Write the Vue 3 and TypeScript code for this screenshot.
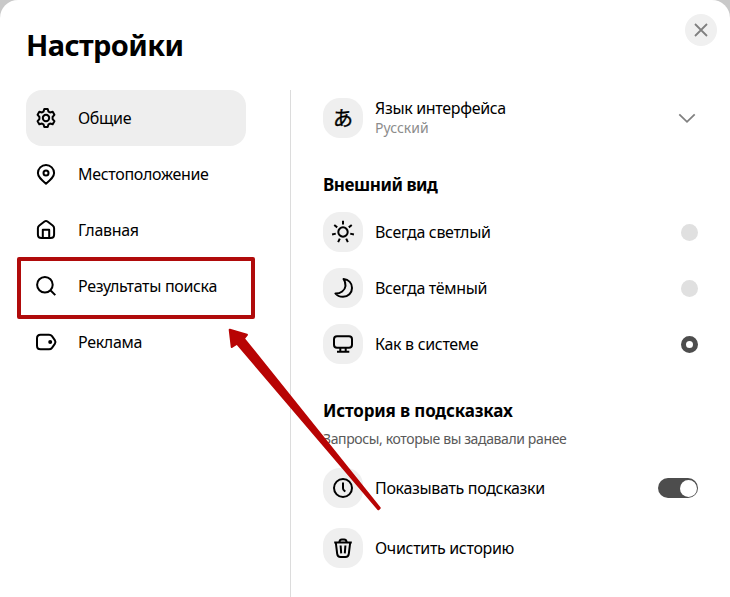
<template>
  <div class="backdrop">
    <div class="modal">
      <button class="close" type="button" aria-label="Закрыть">
        <svg width="16" height="16" viewBox="0 0 16 16"><path d="M2 2l12 12M14 2L2 14" /></svg>
      </button>

      <h1>Настройки</h1>

      <div class="columns">
        <nav>
          <a v-for="item in menu" :key="item.icon" :class="['nav-item', { active: item.active }]">
            <svg class="icon" viewBox="0 0 24 24"><path :d="icons[item.icon]" /><circle v-if="item.icon === 'tag'" class="dot" cx="16.2" cy="12" r="2" /></svg>
            <span>{{ item.label }}</span>
          </a>
        </nav>

        <main>
          <div class="row language">
            <div class="badge"><span class="kana">あ</span></div>
            <div class="text">
              <div class="label">Язык интерфейса</div>
              <div class="value">Русский</div>
            </div>
            <svg class="chevron" width="18" height="12" viewBox="0 0 18 12"><path d="M1.3 2.3L9 9.8L16.7 2.3" /></svg>
          </div>

          <h2 class="theme-title">Внешний вид</h2>
          <div v-for="t in themes" :key="t.icon" class="row" @click="theme = t.icon">
            <div class="badge">
              <svg class="icon" viewBox="0 0 24 24"><path :d="icons[t.icon]" /></svg>
            </div>
            <div class="label">{{ t.label }}</div>
            <span :class="['radio', { checked: theme === t.icon }]"></span>
          </div>

          <h2 class="history-title">История в подсказках</h2>
          <p>Запросы, которые вы задавали ранее</p>
          <div class="row" @click="showHints = !showHints">
            <div class="badge">
              <svg class="icon" viewBox="0 0 24 24"><path :d="icons.clock" /></svg>
            </div>
            <div class="label">Показывать подсказки</div>
            <span :class="['toggle', { on: showHints }]"></span>
          </div>
          <div class="row clear">
            <div class="badge">
              <svg class="icon" viewBox="0 0 24 24"><path :d="icons.trash" /></svg>
            </div>
            <div class="label">Очистить историю</div>
          </div>
        </main>
      </div>
    </div>

    <div class="highlight"></div>
    <svg class="arrow" width="160" height="190" viewBox="0 0 160 190">
      <path d="M9.8 9.8L26.8 14.9L23.8 18.6L159.6 188L158.4 189.2L17 23.6L11.8 26.8Z" />
    </svg>
  </div>
</template>


<script setup lang="ts">
import {ref} from "vue";

interface MenuItem {
  icon: string;
  label: string;
  active?: boolean;
}

const menu: MenuItem[] = [
  {icon: 'gear', label: 'Общие', active: true},
  {icon: 'pin', label: 'Местоположение'},
  {icon: 'home', label: 'Главная'},
  {icon: 'search', label: 'Результаты поиска'},
  {icon: 'tag', label: 'Реклама'},
];

const themes: MenuItem[] = [
  {icon: 'sun', label: 'Всегда светлый'},
  {icon: 'moon', label: 'Всегда тёмный'},
  {icon: 'monitor', label: 'Как в системе'},
];

const theme = ref('monitor');
const showHints = ref(true);

// seven rays around the circle
function sunRays() {
  let d = '';
  for (let i = 0; i < 7; i++) {
    const a = i * 2 * Math.PI / 7;
    const x = Math.sin(a);
    const y = -Math.cos(a);
    d += `M${12 + x * 7.4} ${12 + y * 7.4}L${12 + x * 11.2} ${12 + y * 11.2}`;
  }
  return d;
}

const icons: Record<string, string> = {
  gear: 'M10.3 3h3.4l.8 2.6 1.5.8 2.7-.6 1.7 3-1.8 2.1v2.2l1.8 2.1-1.7 3-2.7-.6-1.5.8-.8 2.6h-3.4l-.8-2.6-1.5-.8-2.7.6-1.7-3 1.8-2.1v-2.2L3.6 8.8l1.7-3 2.7.6 1.5-.8zM15.2 12a3.2 3.2 0 1 1-6.4 0a3.2 3.2 0 1 1 6.4 0z',
  pin: 'M12 21.7C7.5 18 3.9 15 3.9 11a8.1 8 0 0 1 16.2 0C20.1 15 16.5 18 12 21.7zM14.5 11a2.5 2.5 0 1 1-5 0a2.5 2.5 0 1 1 5 0z',
  home: 'M3.9 10.3c0-1.2.5-2.1 1.4-2.8L10.5 3.5q1.5-1.1 3 0l5.2 4c.9.7 1.4 1.6 1.4 2.8v6.2q0 3.5-3.5 3.5h-9.2q-3.5 0-3.5-3.5zM8.8 20v-8.2h6.4V20',
  search: 'M18.7 10.7a7.8 7.8 0 1 1-15.6 0a7.8 7.8 0 1 1 15.6 0zM16.4 16.2l4.9 4.9',
  tag: 'M6.5 4.7h8.5q1.9 0 3 1.5l2.8 3.9q1.3 1.9 0 3.8l-2.8 3.9q-1.1 1.5-3 1.5H6.5q-3.5 0-3.5-3.5V8.2q0-3.5 3.5-3.5z',
  sun: 'M16.7 12a4.7 4.7 0 1 1-9.4 0a4.7 4.7 0 1 1 9.4 0z' + sunRays(),
  moon: 'M12.5 3C17.7 3.6 21 7.3 21 12c0 5.1-3.9 8.8-9 8.8c-3.4 0-6-1.2-7.6-3.3C9.5 17.6 14 14.5 14.5 10C14.7 7.2 14 5 12.5 3z',
  monitor: 'M6 4.2h12q3 0 3 3v5.6q0 3-3 3H6q-3 0-3-3V7.2q0-3 3-3zM9.3 16v3.4M14.7 16v3.4M6 19.7h12.3',
  clock: 'M21 12a9 9 0 1 1-18 0a9 9 0 1 1 18 0zM12 6.5v5.5q0 1 .6 1.8l1.6 1.9',
  trash: 'M3.2 6.4h17.6M8.3 6c.3-1.7 1.2-2.6 2.5-2.6h2.4c1.3 0 2.2.9 2.5 2.6M4.8 6.5l1.4 11.3q.4 3.2 3.4 3.2h4.8q3 0 3.4-3.2l1.4-11.3M9.6 9.5l.6 7.8M14.4 9.5l-.6 7.8',
};
</script>


<style>
body {
  margin: 0;
  overflow: hidden;
}
</style>

<style scoped>
.backdrop {
  position: relative;
  height: 597px;
  overflow: hidden;
  background: #c9c9c9;
  font-family: "Noto Sans", "Open Sans", sans-serif;
  color: #000;
}

.modal {
  position: relative;
  height: 597px;
  box-sizing: border-box;
  padding: 22px 32px 0 26px;
  border-radius: 18px 18px 0 0;
  background: #fff;
}

.close {
  position: absolute;
  top: 14px;
  right: 13px;
  display: flex;
  align-items: center;
  justify-content: center;
  width: 32px;
  height: 32px;
  padding: 0;
  border: 0;
  border-radius: 50%;
  background: #f0f0f0;
}

.close path,
.chevron path {
  fill: none;
  stroke: #808080;
  stroke-width: 1.8;
}

h1 {
  margin: 0;
  height: 46px;
  font-size: 29px;
  line-height: 46px;
  letter-spacing: -0.6px;
}

.columns {
  display: flex;
  margin-top: 22px;
}

nav {
  width: 220px;
  margin-right: 44px;
}

.nav-item {
  display: flex;
  align-items: center;
  gap: 20px;
  height: 56px;
  padding-left: 8px;
  border-radius: 16px;
  font-size: 16px;
  letter-spacing: -0.32px;
}

.nav-item.active {
  background: #eee;
}

.icon {
  width: 24px;
  height: 24px;
  flex: none;
  fill: none;
  stroke: #000;
  stroke-width: 2;
  stroke-linejoin: round;
}

.icon .dot {
  fill: #000;
  stroke: none;
}

main {
  flex: 1;
  height: 507px;
  padding-left: 32px;
  border-left: 1px solid #dcdcdc;
}

.row {
  display: flex;
  align-items: center;
  height: 56px;
}

.badge {
  display: flex;
  align-items: center;
  justify-content: center;
  width: 40px;
  height: 40px;
  margin-right: 12px;
  border-radius: 17px;
  background: #efefef;
}

.kana {
  font: 400 20px/22px "Noto Sans CJK JP", sans-serif;
  -webkit-text-stroke: 0.4px #000;
}

.label {
  font-size: 16px;
  line-height: 20px;
  letter-spacing: -0.32px;
  white-space: nowrap;
}

.language .value {
  font-size: 14px;
  line-height: 20px;
  color: #8c8c8c;
}

.chevron {
  margin-left: auto;
  margin-right: 2px;
}

h2 {
  margin: 0;
  font-size: 17px;
  line-height: 24px;
  white-space: nowrap;
}

.theme-title {
  margin: 27px 0 7px;
  letter-spacing: -0.45px;
}

.history-title {
  margin-top: 27px;
  letter-spacing: -0.16px;
}

p {
  margin: 6px 0 11px;
  font-size: 14px;
  line-height: 20px;
  letter-spacing: -0.38px;
  white-space: nowrap;
  color: #595959;
}

.radio {
  width: 17px;
  height: 17px;
  margin-left: auto;
  box-sizing: border-box;
  border-radius: 50%;
  background: #e0e0e0;
}

.radio.checked {
  border: 5px solid #4d4d4d;
  background: #fff;
}

.toggle {
  width: 40px;
  height: 20px;
  margin-left: auto;
  padding: 1.5px;
  box-sizing: border-box;
  border-radius: 10px;
  background: #bbb;
}

.toggle::after {
  content: "";
  display: block;
  width: 17px;
  height: 17px;
  border-radius: 50%;
  background: #fff;
}

.toggle.on {
  background: #4d4d4d;
}

.toggle.on::after {
  margin-left: auto;
}

.clear {
  margin-top: 4px;
}

.highlight {
  position: absolute;
  left: 17px;
  top: 257px;
  width: 238px;
  height: 62px;
  box-sizing: border-box;
  border: 4px solid #b00b0b;
  border-radius: 2px;
}

.arrow {
  position: absolute;
  left: 220px;
  top: 320px;
  overflow: visible;
  pointer-events: none;
}

.arrow path {
  fill: #b80404;
  stroke: #b80404;
  stroke-width: 2.2;
  stroke-linejoin: round;
}
</style>
